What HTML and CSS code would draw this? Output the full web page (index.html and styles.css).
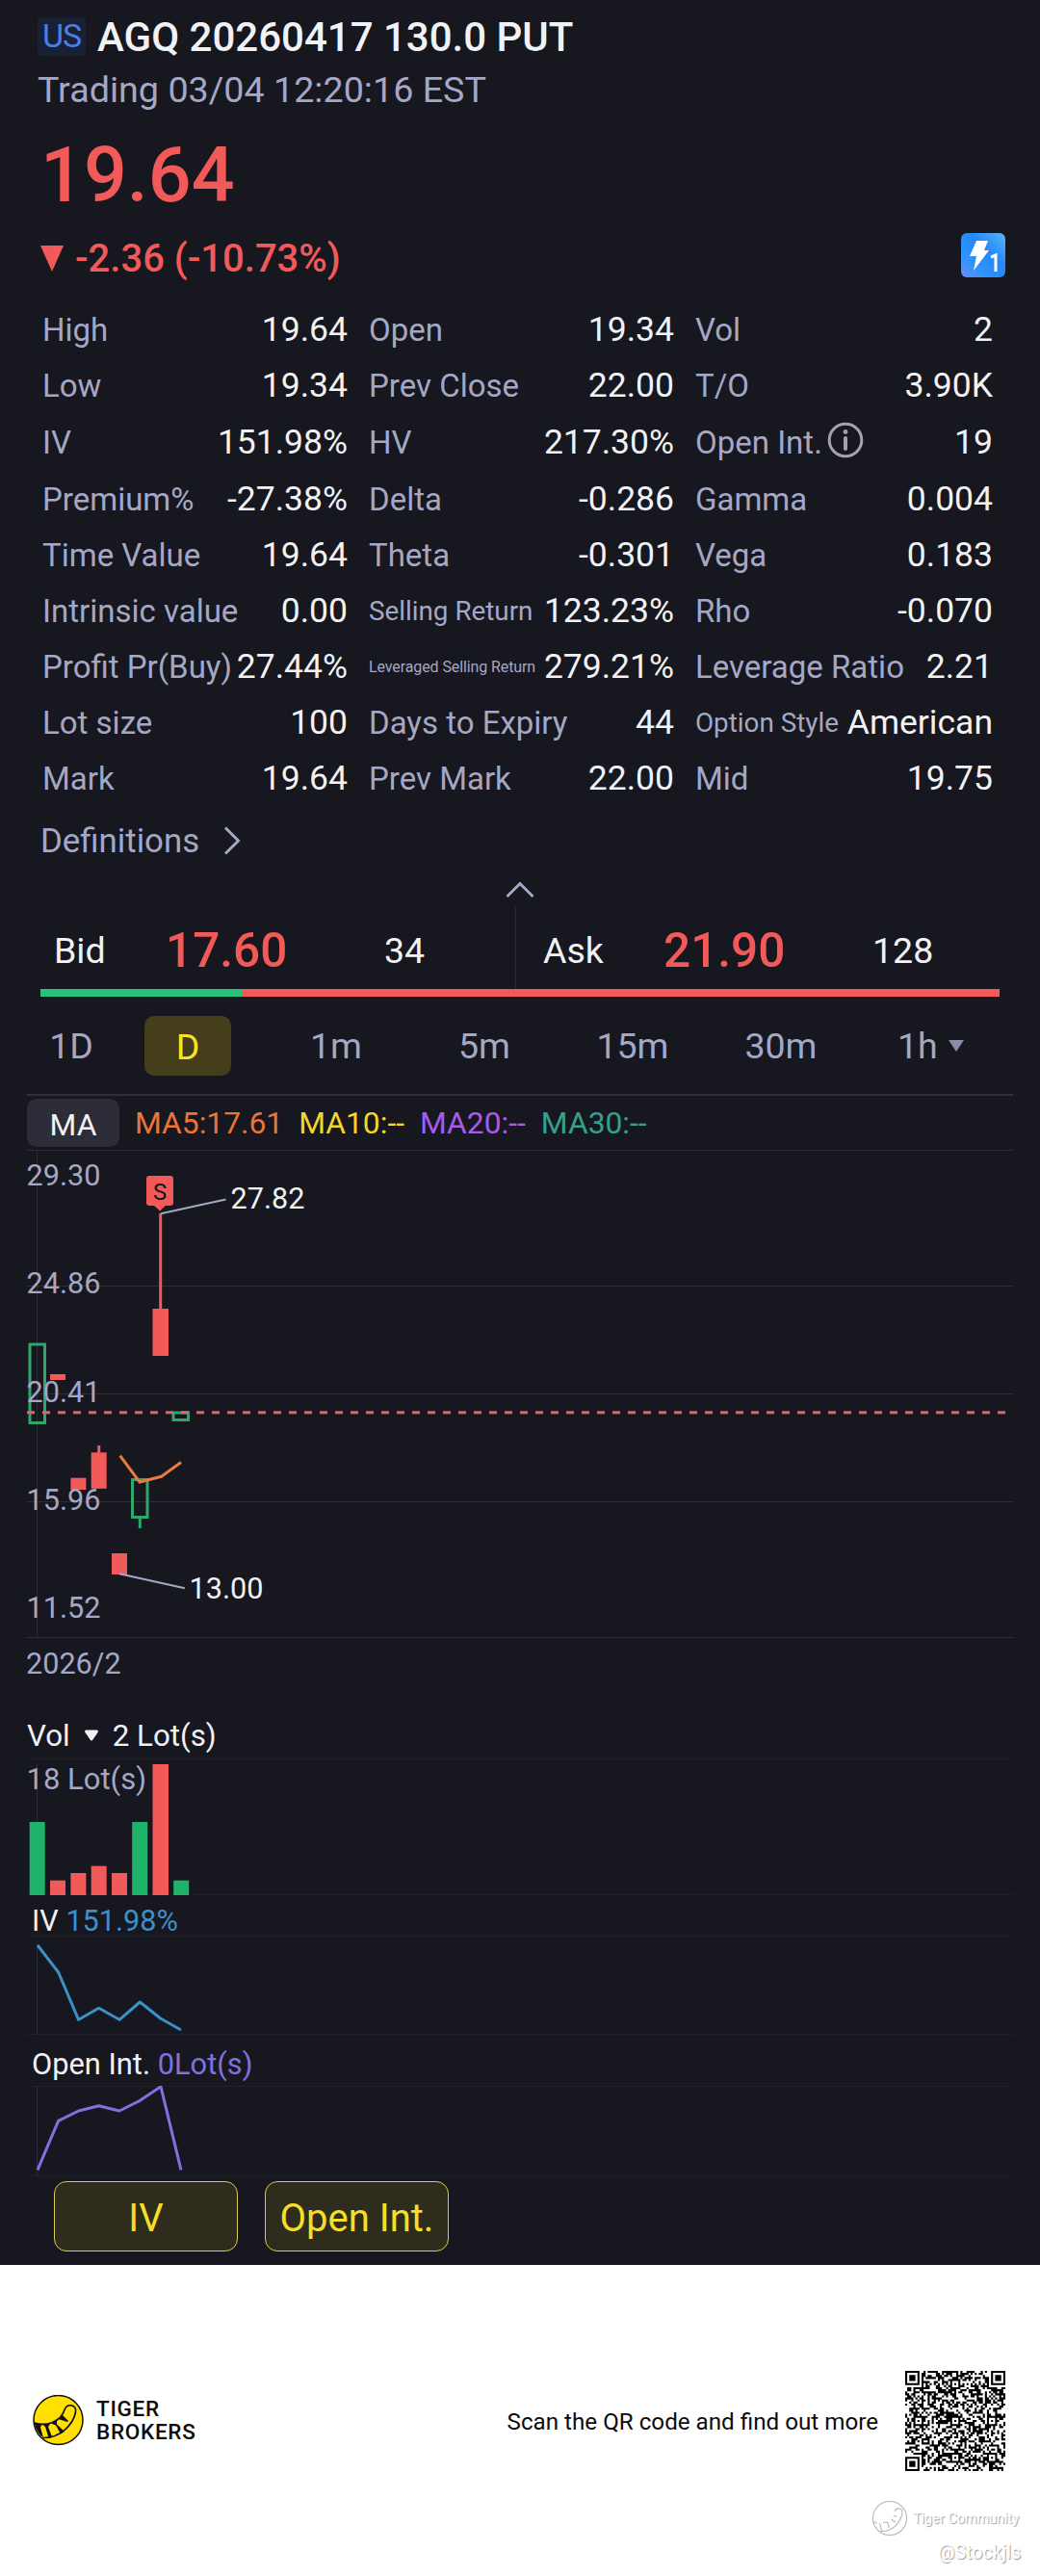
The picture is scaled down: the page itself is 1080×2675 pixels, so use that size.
FILE: index.html
```html
<!DOCTYPE html>
<html lang="en">

<head>
    <meta charset="UTF-8">
    <meta name="viewport" content="width=device-width, initial-scale=1.0">
    <title>AGQ 20260417 130.0 PUT</title>
    <link rel="stylesheet" href="styles.css">
</head>

<body>
    <main class="quote">
        <!-- Header -->
        <header class="header">
            <div class="title-row">
                <span class="market">US</span>
                <h1>AGQ 20260417 130.0 PUT</h1>
            </div>
            <p class="status">Trading 03/04 12:20:16 EST</p>
            <div class="price">19.64</div>
            <div class="change-row">
                <svg class="down" width="24" height="27" viewBox="0 0 24 27"><path d="M0 0h24L12 27z" /></svg>
                <span class="change">-2.36 (-10.73%)</span>
                <svg class="level" width="46" height="46" viewBox="0 0 46 46">
                    <defs>
                        <linearGradient id="levelFill" x1="0" y1="1" x2="1" y2="0">
                            <stop offset="0" stop-color="#6f8df2" />
                            <stop offset="0.3" stop-color="#2e93fb" />
                            <stop offset="0.6" stop-color="#2489f8" />
                            <stop offset="1" stop-color="#5cb4fb" />
                        </linearGradient>
                    </defs>
                    <rect width="46" height="46" rx="6" fill="url(#levelFill)" />
                    <path d="M16 8h12l-4 10h5L13 39l3-15H9z" fill="#fff" />
                    <path d="M31 25l5-2v17" fill="none" stroke="#fff" stroke-width="3" />
                </svg>
            </div>
        </header>

        <!-- Key stats -->
        <section class="stats">
            <div class="stat"><span>High</span><b>19.64</b></div>
            <div class="stat"><span>Open</span><b>19.34</b></div>
            <div class="stat"><span>Vol</span><b>2</b></div>

            <div class="stat"><span>Low</span><b>19.34</b></div>
            <div class="stat"><span>Prev Close</span><b>22.00</b></div>
            <div class="stat"><span>T/O</span><b>3.90K</b></div>

            <div class="stat"><span>IV</span><b>151.98%</b></div>
            <div class="stat"><span>HV</span><b>217.30%</b></div>
            <div class="stat">
                <span>Open Int.</span>
                <svg class="info" width="38" height="38" viewBox="0 0 38 38">
                    <circle cx="19" cy="19" r="16.8" fill="none" stroke="#a3a3a8" stroke-width="3" />
                    <path d="M19 17v11" stroke="#a3a3a8" stroke-width="4" stroke-linecap="round" />
                    <circle cx="19" cy="10.500" r="2.400" fill="#a3a3a8" />
                </svg>
                <b>19</b>
            </div>

            <div class="stat"><span>Premium%</span><b>-27.38%</b></div>
            <div class="stat"><span>Delta</span><b>-0.286</b></div>
            <div class="stat"><span>Gamma</span><b>0.004</b></div>

            <div class="stat"><span>Time Value</span><b>19.64</b></div>
            <div class="stat"><span>Theta</span><b>-0.301</b></div>
            <div class="stat"><span>Vega</span><b>0.183</b></div>

            <div class="stat"><span>Intrinsic value</span><b>0.00</b></div>
            <div class="stat"><span class="small">Selling Return</span><b>123.23%</b></div>
            <div class="stat"><span>Rho</span><b>-0.070</b></div>

            <div class="stat"><span>Profit Pr(Buy)</span><b>27.44%</b></div>
            <div class="stat"><span class="tiny">Leveraged Selling Return</span><b>279.21%</b></div>
            <div class="stat"><span>Leverage Ratio</span><b>2.21</b></div>

            <div class="stat"><span>Lot size</span><b>100</b></div>
            <div class="stat"><span>Days to Expiry</span><b>44</b></div>
            <div class="stat"><span class="small">Option Style</span><b>American</b></div>

            <div class="stat"><span>Mark</span><b>19.64</b></div>
            <div class="stat"><span>Prev Mark</span><b>22.00</b></div>
            <div class="stat"><span>Mid</span><b>19.75</b></div>
        </section>

        <div class="definitions">
            Definitions
            <svg width="18" height="30" viewBox="0 0 18 30"><path d="M2 1.500L15.500 15L2 28.500" /></svg>
        </div>
        <div class="collapse">
            <svg width="30" height="18" viewBox="0 0 30 18"><path d="M1.500 16L15 2.500L28.500 16" /></svg>
        </div>

        <!-- Bid / Ask -->
        <section class="book">
            <div class="side">
                <span>Bid</span><span class="quote-price">17.60</span><span>34</span>
            </div>
            <div class="side ask">
                <span>Ask</span><span class="quote-price">21.90</span><span>128</span>
            </div>
        </section>
        <div class="depth"><div class="depth-bid"></div></div>

        <!-- Periods -->
        <nav class="periods">
            <span>1D</span>
            <span class="active">D</span>
            <span>1m</span>
            <span>5m</span>
            <span>15m</span>
            <span>30m</span>
            <span class="more">1h<svg width="16" height="12" viewBox="0 0 16 12"><path d="M0 0h16L8 12z" /></svg></span>
        </nav>

        <div class="ma-row">
            <span class="ma-pill">MA</span>
            <span class="ma5">MA5:17.61</span>
            <span class="ma10">MA10:--</span>
            <span class="ma20">MA20:--</span>
            <span class="ma30">MA30:--</span>
        </div>

        <!-- Candles -->
        <svg class="chart" width="1080" height="566" viewBox="0 1194 1080 566">
            <path class="grid" d="M28 1194.500H1052M28 1335.500H1052M28 1447.500H1052M28 1559.500H1052M28 1700.500H1052M38.500 1194V1700" />
            <g class="hollow">
                <rect x="31" y="1396" width="15.500" height="81.500" />
                <rect x="137.500" y="1536.500" width="15.500" height="39" />
                <path d="M145.300 1576V1587" />
                <rect x="180" y="1467" width="15.500" height="7.500" />
            </g>
            <g class="solid">
                <rect x="52" y="1427" width="16" height="6" />
                <rect x="73.400" y="1534.700" width="16" height="12.300" />
                <rect x="94.700" y="1508.300" width="16" height="37.500" />
                <rect x="101.200" y="1501" width="3" height="8" />
                <rect x="116" y="1613" width="16" height="22" />
                <rect x="158.500" y="1359" width="16.500" height="49" />
                <rect x="165.200" y="1260" width="3" height="100" />
            </g>
            <path class="last" d="M28 1466.700H1044" />
            <path class="ma5-line" d="M124.700 1511.700L145 1539L167.500 1533.300L188 1518.500" />
            <path class="leader" d="M167 1260.300L234.500 1245.500M124 1634.300L191.800 1649.300" />
            <path class="badge" d="M155 1221h22q3 0 3 3v25q0 3-3 3h-5l-6 5.500l-6-5.500h-5q-3 0-3-3v-25q0-3 3-3z" />
            <text class="badge-text" x="166" y="1245.500">S</text>
            <g class="axis">
                <text x="27.500" y="1231">29.30</text>
                <text x="27.500" y="1343">24.86</text>
                <text x="27.500" y="1456">20.41</text>
                <text x="27.500" y="1568">15.96</text>
                <text x="27.500" y="1680">11.52</text>
                <text x="27" y="1738">2026/2</text>
            </g>
            <g class="mark">
                <text x="239.500" y="1255">27.82</text>
                <text x="196.500" y="1660">13.00</text>
            </g>
        </svg>

        <!-- Volume -->
        <div class="sub-title vol-title">
            Vol
            <svg width="16" height="13" viewBox="0 0 16 13"><path d="M2.500 2h11L8 10z" /></svg>
            2 Lot(s)
        </div>
        <svg class="chart" width="1080" height="150" viewBox="0 1826 1080 150">
            <path class="grid faint" d="M28 1826.500H1052M28 1967.500H1052" />
            <path class="grid" d="M38.500 1832V1967" />
            <g class="up">
                <rect x="30.700" y="1892" width="16" height="76" />
                <rect x="137.200" y="1892" width="16" height="76" />
                <rect x="180.200" y="1952.700" width="16" height="15.300" />
            </g>
            <g class="solid">
                <rect x="52" y="1952.700" width="16" height="15.300" />
                <rect x="73.400" y="1945" width="16" height="23" />
                <rect x="94.700" y="1937.700" width="16" height="30.300" />
                <rect x="116" y="1945" width="16" height="23" />
                <rect x="158.500" y="1832" width="16.500" height="136" />
            </g>
            <g class="axis"><text class="lots" x="27.500" y="1858">18 Lot(s)</text></g>
        </svg>

        <!-- Implied volatility -->
        <div class="sub-title iv-title">IV <span class="iv">151.98%</span></div>
        <svg class="chart" width="1080" height="110" viewBox="0 2010 1080 110">
            <path class="grid faint" d="M28 2010.500H1052M28 2112.500H1052" />
            <path class="grid" d="M38.500 2018V2113" />
            <path class="line iv-line" d="M39 2020L60.600 2048L81.600 2097.300L102.600 2085.300L124 2097.300L145.300 2079L166.700 2096L188 2108" />
        </svg>

        <!-- Open interest -->
        <div class="sub-title oi-title">Open Int. <span class="oi">0Lot(s)</span></div>
        <svg class="chart" width="1080" height="99" viewBox="0 2166 1080 99">
            <path class="grid faint" d="M28 2166.500H1052M28 2259.500H1052" />
            <path class="grid" d="M38.500 2166V2260" />
            <path class="line oi-line" d="M39 2253.300L60.600 2202.300L81.600 2192L102.600 2186.700L124 2192L145.300 2181.300L167 2166.800L188 2253.300" />
        </svg>

        <div class="indicators">
            <button>IV</button>
            <button>Open Int.</button>
        </div>
    </main>

    <!-- Footer -->
    <footer class="footer">
        <div class="share">
            <svg class="logo" width="54" height="54" viewBox="0 0 54 54">
                <circle cx="26.500" cy="26" r="25.500" fill="#ffe000" />
                <path d="M1.500 29C14 33 29 28 33 15.500C36 8 46 10 44.500 18C42 31 28 45 10.500 44.500" fill="none" stroke="#111" stroke-width="1.700" />
                <path d="M1.500 28.500l8 2l-1.500 3l3 11q-7-5-9.500-16zM10 30.500l8-.5l-2 3l4 10.500l-3.500 1l-3.500-11.500zM19 29.500l6-3l0 4l8 7.500l-4 2.500l-5-9zM26.500 25l4.500-4l6 6l-1 1z" fill="#111" />
                <circle cx="26.500" cy="26" r="25.500" fill="none" stroke="#111" stroke-width="1.500" />
            </svg>
            <div class="brand">TIGER<br>BROKERS</div>
            <p class="scan">Scan the QR code and find out more</p>
            <svg class="qr" id="qr" width="104" height="104" viewBox="0 0 49 49"></svg>
        </div>
        <div class="watermark">
            <svg width="38" height="38" viewBox="0 0 54 54">
                <circle cx="27" cy="27" r="25" />
                <path d="M4 32l4 3M34 17C37 10 46 12 45.500 19C43 34 30 48 13 46M12 34l3 11M17 33h7l2 8M29 28l6 5M33 23l4 2" />
            </svg>
            <span>Tiger Community</span>
        </div>
        <div class="user">@Stockjls</div>
    </footer>

    <script>
        // QR code, 49x49 modules
        const size = 49;
        const centers = [6, 24, 42];
        let seed = 20260417;

        function random() {
            seed = (seed * 1103515245 + 12345) % 2147483648;
            return seed / 2147483648;
        }

        function ring(x, y, cx, cy) {
            return Math.max(Math.abs(x - cx), Math.abs(y - cy));
        }

        function isDark(x, y) {
            const noise = random() < 0.5;
            for (const [cx, cy] of [[3, 3], [45, 3], [3, 45]]) {
                const r = ring(x, y, cx, cy);
                if (r <= 4) return r !== 2 && r !== 4;
            }
            for (const cx of centers) {
                for (const cy of centers) {
                    const r = ring(x, y, cx, cy);
                    if (r <= 2) return r !== 1;
                }
            }
            if (x === 6) return y % 2 === 0;
            if (y === 6) return x % 2 === 0;
            return noise;
        }

        let d = "";
        for (let y = 0; y < size; y++) {
            for (let x = 0; x < size; x++) {
                if (isDark(x, y)) d += `M${x} ${y}h1v1h-1z`;
            }
        }
        document.getElementById("qr").innerHTML = `<path d="${d}"/>`;
    </script>
</body>

</html>
```
FILE: styles.css
```css
/* General Styles */
* {
    margin: 0;
    padding: 0;
    box-sizing: border-box;
}

body {
    width: 1080px;
    font-family: Roboto, 'Liberation Sans', sans-serif;
    background: #ffffff;
    color: #f2f2f4;
}

svg {
    display: block;
    flex-shrink: 0;
}

.quote {
    height: 2352px;
    background: #16171f;
    overflow: hidden;
}

/* Header */
.header {
    padding: 18px 36px 0 39px;
    height: 313px;
}

.title-row {
    display: flex;
    align-items: center;
    height: 40px;
    gap: 12px;
}

.market {
    width: 50px;
    height: 40px;
    line-height: 39px;
    border-radius: 4px;
    background: #182036;
    color: #4a7fe0;
    font-size: 34px;
    text-align: center;
    letter-spacing: -1px;
}

.title-row h1 {
    padding-top: 2px;
    font-size: 42px;
    line-height: 42px;
    font-weight: 500;
}

.status {
    margin-top: 13px;
    line-height: 44px;
    font-size: 37.7px;
    color: #a5a7c4;
}

.price {
    margin: 22px 0 0 3px;
    line-height: 90px;
    font-size: 79px;
    font-weight: 500;
    color: #f15a58;
}

.change-row {
    display: flex;
    align-items: center;
    height: 46px;
    margin-top: 15px;
    color: #f15a58;
}

.down {
    margin: 6px 0 0 3px;
    fill: #f15a58;
}

.change {
    margin: 6px 0 0 12px;
    font-size: 40px;
    font-weight: 500;
}

.level {
    margin-left: auto;
}

/* Key stats */
.stats {
    display: grid;
    grid-template-columns: 317px 317px 309px;
    grid-template-rows: 58px 58px 60px repeat(6, 58px);
    column-gap: 22px;
    padding-left: 44px;
}

.stat {
    display: flex;
    align-items: center;
    justify-content: space-between;
    white-space: nowrap;
    font-size: 35.5px;
}

.stat span {
    font-size: 33px;
    color: #a5a7c4;
}

.stat b {
    font-weight: 400;
}

.stat .small {
    font-size: 27.8px;
}

.stat .tiny {
    font-size: 16px;
    letter-spacing: -0.1px;
}

.info {
    margin: -4px auto 0 5px;
}

.definitions {
    display: flex;
    align-items: center;
    gap: 25px;
    height: 70px;
    padding-left: 42px;
    padding-top: 1px;
    font-size: 34.8px;
    color: #a5a7c4;
}

.definitions svg,
.collapse svg {
    fill: none;
    stroke: #a5a7c4;
    stroke-width: 3;
}

.collapse {
    display: flex;
    justify-content: center;
    height: 35px;
    padding-top: 8px;
}

/* Bid / Ask */
.book {
    display: grid;
    grid-template-columns: 535px 1fr;
    height: 85px;
}

.side {
    display: grid;
    grid-template-columns: 116px 227px 1fr;
    align-items: center;
    padding: 4px 0 0 56px;
    font-size: 37.5px;
}

.ask {
    grid-template-columns: 125px 217px 1fr;
    padding-left: 28px;
    border-left: 1px solid #2a2b33;
}

.quote-price {
    font-size: 49.5px;
    font-weight: 500;
    color: #f15a58;
}

.depth {
    height: 8px;
    margin: 0 42px;
    background: #f15a58;
}

.depth-bid {
    width: 21%;
    height: 8px;
    background: #2cc17b;
}

/* Periods */
.periods {
    display: grid;
    grid-template-columns: 92px 152px 154px 154px 154px 154px 1fr;
    align-items: center;
    height: 103px;
    margin: 0 28px;
    border-bottom: 2px solid #303138;
    font-size: 37.5px;
    line-height: 64px;
    color: #a5a7c4;
    text-align: center;
}

.periods .active {
    width: 90px;
    height: 62px;
    margin-left: 30px;
    border-radius: 10px;
    background: #443e1b;
    color: #fde125;
}

.periods .more {
    display: flex;
    align-items: center;
    gap: 11px;
    padding-left: 44px;
}

.more svg {
    fill: #8b8da6;
}

/* Moving averages */
.ma-row {
    display: flex;
    align-items: center;
    gap: 16px;
    height: 56px;
    padding-left: 28px;
    font-size: 31.8px;
    line-height: 55px;
}

.ma-row span {
    padding-top: 1px;
}

.ma-row .ma-pill {
    width: 96px;
    height: 50px;
    padding: 0;
    border-radius: 10px;
    background: #2d2d3a;
    text-align: center;
}

.ma5 {
    color: #ee7338;
}

.ma10 {
    color: #f3d62c;
}

.ma20 {
    color: #a95ae8;
}

.ma30 {
    color: #35a18d;
}

/* Charts */
.chart text {
    font-size: 30.6px;
}

.chart .lots {
    font-size: 31px;
}

.grid {
    fill: none;
    stroke: #2c2d35;
    stroke-width: 1;
}

.faint {
    stroke: #1f2028;
}

.axis {
    fill: #a5a7c4;
}

.mark {
    fill: #f2f2f4;
}

.solid {
    fill: #f15a58;
}

.up {
    fill: #20b26b;
}

.hollow {
    fill: none;
    stroke: #2fa66c;
    stroke-width: 3;
}

.last {
    stroke: #e0646a;
    stroke-width: 3;
    stroke-dasharray: 8 8;
}

.ma5-line {
    fill: none;
    stroke: #ec7a43;
    stroke-width: 3;
}

.leader {
    stroke: #a5a7c4;
    stroke-width: 2;
}

.badge {
    fill: #f15a58;
}

.chart .badge-text {
    font-size: 24px;
    fill: #1b1217;
    text-anchor: middle;
}

.line {
    fill: none;
    stroke-width: 3;
    stroke-linejoin: round;
}

.iv-line {
    stroke: #3b91c8;
}

.oi-line {
    stroke: #8171e0;
}

.sub-title {
    font-size: 31px;
    white-space: pre;
}

.vol-title {
    display: flex;
    align-items: center;
    gap: 14px;
    height: 66px;
    padding: 18px 0 0 28px;
    font-size: 31.3px;
    white-space: normal;
}

.vol-title svg {
    fill: #f2f2f4;
    stroke: #f2f2f4;
    stroke-width: 3;
    stroke-linejoin: round;
}

.iv-title {
    height: 34px;
    line-height: 38px;
    padding-left: 33px;
    font-size: 30.6px;
}

.oi-title {
    height: 46px;
    line-height: 47px;
    padding-left: 33px;
    font-size: 30.8px;
}

.iv {
    color: #3b91c8;
}

.oi {
    color: #8171e0;
}

/* Indicator buttons */
.indicators {
    display: flex;
    gap: 28px;
    padding-left: 56px;
}

.indicators button {
    width: 191px;
    height: 73px;
    border: 1px solid #d8cb4d;
    border-radius: 13px;
    background: #2e2c1c;
    color: #f5df26;
    font: 40px Roboto, sans-serif;
    padding-top: 3px;
}

/* Footer */
.footer {
    height: 323px;
    padding-top: 110px;
    color: #0c0c0e;
    overflow: hidden;
}

.share {
    display: flex;
    align-items: center;
    height: 104px;
    padding: 0 36px 0 34px;
}

.brand {
    margin: -2px 0 0 12px;
    font-size: 22.5px;
    line-height: 24px;
    font-weight: 500;
    letter-spacing: 0.7px;
}

.scan {
    margin: 1px 28px 0 auto;
    font-size: 24.2px;
}

.watermark {
    display: flex;
    align-items: center;
    justify-content: flex-end;
    gap: 5px;
    height: 38px;
    margin: 30px 22px 0 0;
    font-size: 14.4px;
    color: #ffffff;
    text-shadow: 1px 1px 1px #999;
}

.watermark svg {
    fill: none;
    stroke: #b4b4b4;
    stroke-width: 1.5;
}

.user {
    margin: 4px 20px 0 0;
    font-size: 19.5px;
    line-height: 25px;
    color: #ffffff;
    text-align: right;
    text-shadow: 1px 1px 1px #999;
}
```
